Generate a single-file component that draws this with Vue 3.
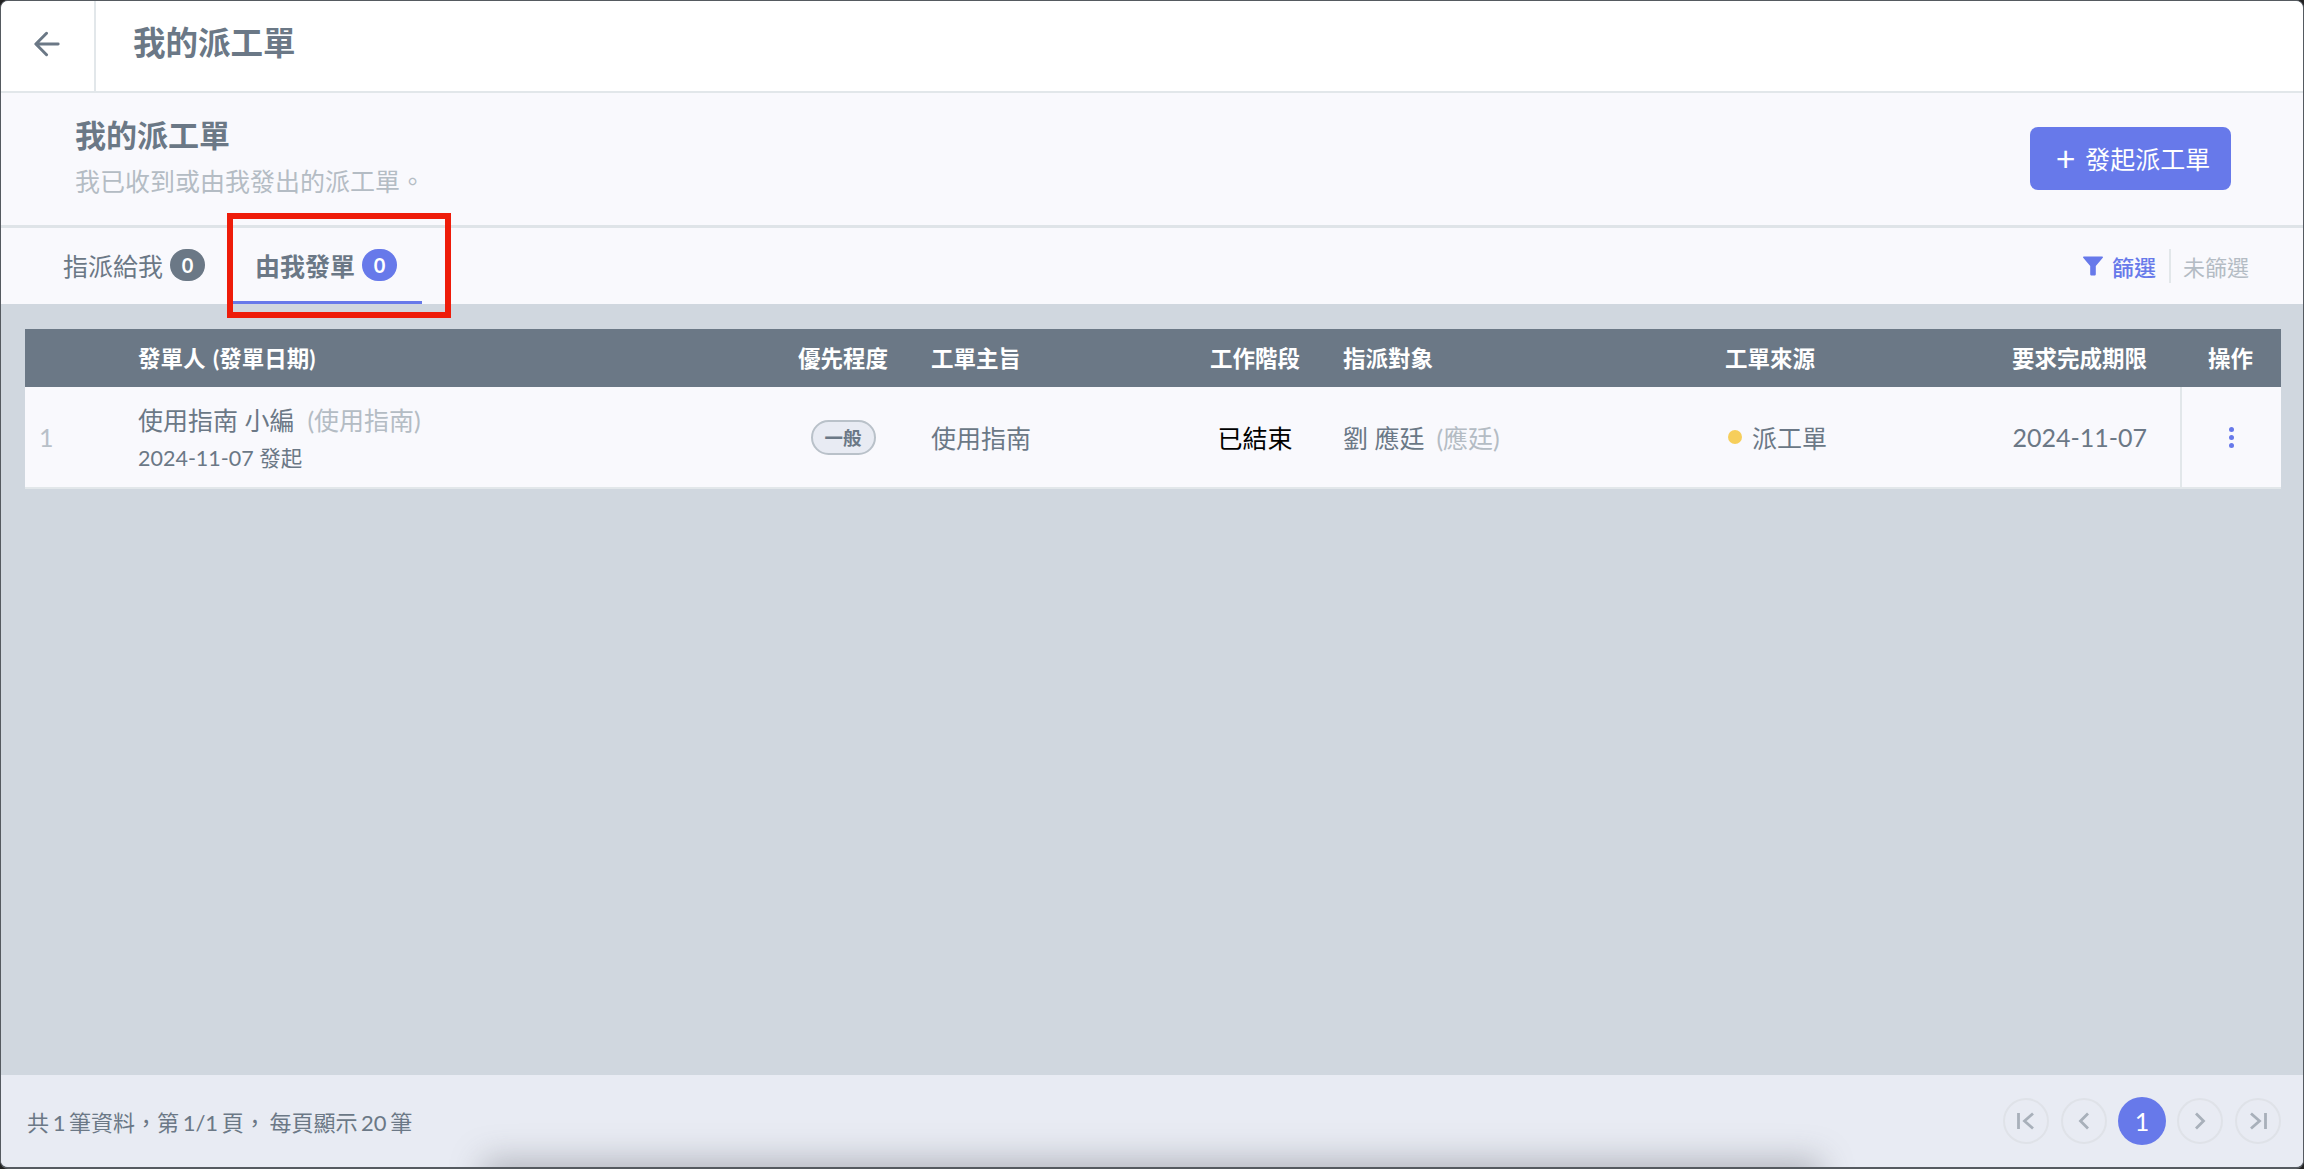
<script setup>
const columns = [
  { label: '', cls: '' },
  { label: '發單人 (發單日期)', cls: 'c-sender' },
  { label: '優先程度', cls: 'c-center' },
  { label: '工單主旨', cls: 'c-subject' },
  { label: '工作階段', cls: 'c-center' },
  { label: '指派對象', cls: 'c-assignee' },
  { label: '工單來源', cls: 'c-source' },
  { label: '要求完成期限', cls: 'c-deadline' },
  { label: '操作', cls: 'c-center' },
]
</script>

<template>
  <div class="frame">
    <header class="topbar">
      <button class="back" aria-label="返回">
        <svg width="26" height="26" viewBox="0 0 28 28" fill="none" stroke="#6b7886" stroke-width="3.200" stroke-linecap="round" stroke-linejoin="round">
          <path d="M26 14H2.500M13.500 2.500 2 14l11.500 11.500" />
        </svg>
      </button>
      <h1 class="topbar-title">我的派工單</h1>
    </header>

    <section class="intro">
      <div>
        <h2 class="intro-title">我的派工單</h2>
        <p class="intro-sub">我已收到或由我發出的派工單。</p>
      </div>
      <button class="primary"><span class="plus">+</span>發起派工單</button>
    </section>

    <nav class="tabs">
      <div class="tab first">指派給我<span class="count">0</span></div>
      <div class="tab active">由我發單<span class="count blue">0</span></div>
      <div class="filters">
        <svg class="funnel" width="20" height="20" viewBox="0 0 20 20" fill="#6779ea">
          <path d="M.8.500h18.400c.7 0 1 .8.6 1.300L12.800 10v8.200c0 .8-.6 1.300-1.300 1.300H8.600c-.8 0-1.400-.5-1.400-1.300V10L.2 1.800C-.2 1.300.1.500.8.500z" />
        </svg>
        <span class="filter-link">篩選</span>
        <span class="filter-sep"></span>
        <span class="filter-none">未篩選</span>
      </div>
    </nav>

    <main class="content">
      <div class="table">
        <div class="thead">
          <div v-for="col in columns" :key="col.label" :class="col.cls">{{ col.label }}</div>
        </div>
        <div class="trow">
          <div class="idx">1</div>
          <div class="c-sender">
            <div class="name">使用指南 小編<span class="muted">(使用指南)</span></div>
            <div class="sent">2024-11-07 發起</div>
          </div>
          <div class="c-center"><span class="pill">一般</span></div>
          <div class="c-subject">使用指南</div>
          <div class="c-center stage">已結束</div>
          <div class="c-assignee">劉 應廷<span class="muted small-gap">(應廷)</span></div>
          <div class="c-source source"><i class="dot"></i>派工單</div>
          <div class="c-deadline">2024-11-07</div>
          <div class="c-center actions"><span class="kebab"><i></i><i></i><i></i></span></div>
        </div>
      </div>
    </main>

    <footer class="footer">
      <div class="summary">共 1 筆資料，第 1/1 頁， 每頁顯示 20 筆</div>
      <div class="pager">
        <span class="page">
          <svg width="22" height="22" viewBox="0 0 22 22" fill="none" stroke="#a8b0ba" stroke-width="2.800"><path d="M3.500 3v16M18 3.500 9.500 11 18 18.500" /></svg>
        </span>
        <span class="page">
          <svg width="22" height="22" viewBox="0 0 22 22" fill="none" stroke="#a8b0ba" stroke-width="2.800"><path d="M15 3.500 7.500 11 15 18.500" /></svg>
        </span>
        <span class="page current">1</span>
        <span class="page">
          <svg width="22" height="22" viewBox="0 0 22 22" fill="none" stroke="#a8b0ba" stroke-width="2.800"><path d="M7 3.500 14.500 11 7 18.500" /></svg>
        </span>
        <span class="page">
          <svg width="22" height="22" viewBox="0 0 22 22" fill="none" stroke="#a8b0ba" stroke-width="2.800"><path d="M4 3.500 12.500 11 4 18.500M18.500 3v16" /></svg>
        </span>
      </div>
      <div class="glow"></div>
    </footer>

    <div class="highlight"></div>
  </div>
</template>

<style>
html, body { margin: 0; background: #222; }
</style>

<style scoped>
.frame {
  position: relative;
  box-sizing: border-box;
  width: 2304px;
  height: 1169px;
  display: flex;
  flex-direction: column;
  overflow: hidden;
  border: 1px solid #555a60;
  border-bottom-width: 2px;
  border-radius: 8px;
  background: #d0d7df;
  color: #6b7886;
  font-family: Lato, "Noto Sans CJK TC", sans-serif;
  font-size: 25px;
}

.topbar {
  height: 90px;
  flex: none;
  display: flex;
  align-items: center;
  background: #fff;
  border-bottom: 2px solid #e2e7ea;
}
.back {
  width: 95px;
  height: 100%;
  flex: none;
  box-sizing: border-box;
  display: flex;
  align-items: center;
  justify-content: center;
  padding: 0 2px 4px 0;
  background: none;
  border: 0;
  border-right: 2px solid #e2e7ea;
}
.topbar-title {
  margin: 0 0 5px 37px;
  font-size: 32.500px;
  font-weight: 700;
  line-height: 1;
}

.intro {
  height: 135px;
  flex: none;
  box-sizing: border-box;
  display: flex;
  align-items: center;
  justify-content: space-between;
  padding: 0 72px 4px 74px;
  background: #f9f9fd;
  border-bottom: 3px solid #dfe4e8;
}
.intro-title {
  margin: 0 0 4px;
  font-size: 31px;
  line-height: 44px;
  font-weight: 700;
}
.intro-sub {
  margin: 0;
  color: #b4bcc4;
  font-size: 25px;
  line-height: 40px;
}
.primary {
  width: 201px;
  height: 63px;
  margin-top: 2px;
  display: flex;
  align-items: center;
  justify-content: center;
  padding: 0 0 0 5px;
  border: 0;
  border-radius: 8px;
  background: #6779ea;
  color: #fff;
  font-family: inherit;
  font-size: 25px;
}
.plus {
  margin-right: 10px;
  font-size: 34px;
  line-height: 1;
  font-weight: 400;
}

.tabs {
  height: 76px;
  flex: none;
  box-sizing: border-box;
  display: flex;
  padding-left: 38px;
  background: #f9f9fd;
}
.tab {
  display: flex;
  align-items: center;
  height: 100%;
  box-sizing: border-box;
  padding: 0 26px 3px 23px;
  font-size: 25px;
}
.tab.first {
  margin-left: 1px;
  padding-right: 27px;
}
.tab.active {
  padding: 0 25px 0 23px;
  font-weight: 700;
  border-bottom: 3px solid #6779ea;
}
.count {
  width: 35px;
  height: 32px;
  margin-left: 7px;
  display: flex;
  align-items: center;
  justify-content: center;
  border-radius: 16px;
  background: #6b7886;
  color: #fff;
  font-size: 20px;
  font-weight: 700;
}
.count.blue { background: #6779ea; }
.filters {
  margin-left: auto;
  margin-right: 54px;
  display: flex;
  align-items: center;
  font-size: 22px;
}
.filter-link { margin-left: 9px; color: #6779ea; font-weight: 500; }
.filter-sep {
  width: 2px;
  height: 34px;
  margin: 0 12px 0 13px;
  background: #e2e7ea;
}
.filter-none { color: #b4bcc4; }

.content {
  flex: 1;
  padding: 25px 22px 0 24px;
  background: #d0d7df;
}
.thead, .trow {
  display: grid;
  grid-template-columns: 113px 635px 140px 277px 130px 380px 290px 190px 101px;
  align-items: center;
}
.thead {
  box-sizing: border-box;
  height: 58px;
  padding-bottom: 2px;
  background: #6b7886;
  color: #fff;
  font-size: 22.500px;
  font-weight: 700;
  word-spacing: 2px;
}
.trow {
  height: 102px;
  background: #f9f9fd;
  border-bottom: 2px solid #e2e7ea;
  box-sizing: border-box;
}
.c-center { text-align: center; }
.c-subject { padding-left: 18px; }
.c-assignee { padding-left: 23px; }
.c-source { padding-left: 25px; }
.c-deadline { padding-right: 33px; text-align: right; }
.idx { padding-left: 14px; color: #b8c0c8; }
.name { line-height: 36px; }
.muted { margin-left: 13px; color: #b4bcc4; }
.small-gap { margin-left: 12px; }
.sent { margin-top: 5px; font-size: 21.500px; line-height: 30px; }
.pill {
  display: inline-flex;
  align-items: center;
  justify-content: center;
  box-sizing: border-box;
  width: 65px;
  height: 35px;
  border: 2px solid #b9c1c9;
  border-radius: 18px;
  background: #e8ebf3;
  font-size: 18.500px;
  font-weight: 700;
}
.stage { color: #000; }
.source { display: flex; align-items: center; }
.dot {
  width: 14px;
  height: 14px;
  margin-right: 10px;
  margin-left: 3px;
  border-radius: 50%;
  background: #f6ce5b;
}
.actions {
  align-self: stretch;
  display: flex;
  align-items: center;
  justify-content: center;
  padding-right: 1px;
  border-left: 2px solid #e2e7ea;
}
.kebab { display: flex; flex-direction: column; gap: 3px; }
.kebab i {
  width: 5px;
  height: 5px;
  border-radius: 50%;
  background: #6779ea;
}

.footer {
  position: relative;
  height: 92px;
  flex: none;
  box-sizing: border-box;
  display: flex;
  align-items: center;
  justify-content: space-between;
  padding: 0 22px 0 26px;
  overflow: hidden;
  background: #e8ebf3;
}
.summary { position: relative; z-index: 1; font-size: 22px; word-spacing: -2px; }
.pager { position: relative; z-index: 1; display: flex; align-items: center; gap: 12px; }
.page {
  width: 46px;
  height: 46px;
  box-sizing: border-box;
  display: flex;
  align-items: center;
  justify-content: center;
  border: 2px solid #dfe2e8;
  border-radius: 50%;
}
.page.current {
  width: 48px;
  height: 48px;
  margin: 0 -1px;
  border: 0;
  background: #6779ea;
  color: #fff;
}
.glow {
  position: absolute;
  left: 490px;
  right: 490px;
  bottom: -30px;
  height: 30px;
  box-shadow: 0 0 32px 8px rgba(120, 122, 130, 0.45);
  background: rgba(120, 122, 130, 0.45);
}

.highlight {
  position: absolute;
  left: 226px;
  top: 212px;
  width: 224px;
  height: 105px;
  box-sizing: border-box;
  border: 6px solid #ee1c0a;
}
</style>
